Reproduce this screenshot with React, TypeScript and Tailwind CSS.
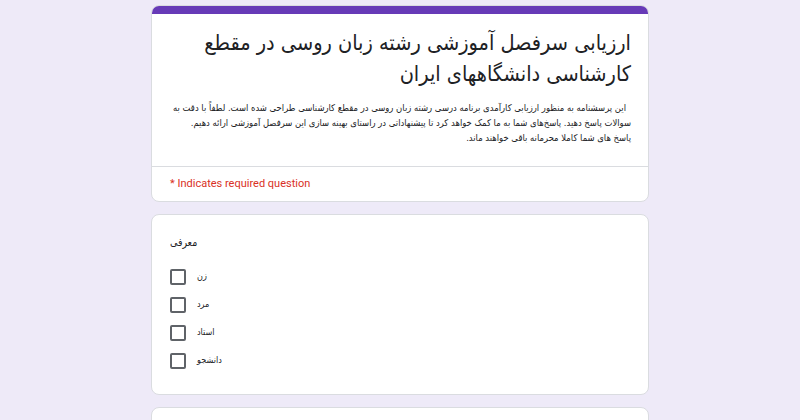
const fa = { fontFamily: '"DejaVu Sans Condensed", "DejaVu Sans", sans-serif' };

const options = ['زن', 'مرد', 'استاد', 'دانشجو'];

function Checkbox({ label }: { label: string }) {
  return (
    <div className="flex items-center h-[28px]">
      <span className="w-[16px] h-[16px] rounded-[2px] border-2 border-[#5f6368] shrink-0" />
      <span className="ml-[11px] text-[9px] text-[#202124]" style={fa}>
        {label}
      </span>
    </div>
  );
}

export default function App() {
  return (
    <div className="h-[420px] bg-[#eeeaf8] overflow-hidden">
      <div className="w-[498px] mx-auto pt-[5px] flex flex-col gap-[12px]">
        <div className="bg-white rounded-[8px] border border-[#dadce0] overflow-hidden">
          <div className="h-[8px] bg-[#673ab7]" />
          <div dir="rtl" className="px-[17px] pt-[13px] pb-[21px] border-b border-[#dadce0]">
            <h1 className="text-[21.5px] leading-[31px] text-[#202124] font-normal" style={fa}>
              <div className="whitespace-nowrap">ارزیابی سرفصل آموزشی رشته زبان روسی در مقطع</div>
              <div className="whitespace-nowrap">کارشناسی  دانشگاههای ایران</div>
            </h1>
            <div className="mt-[11px] text-[9.4px] leading-[15px] text-[#202124]" style={fa}>
              <div className="whitespace-nowrap pr-[5px]">
                این پرسشنامه به منظور ارزیابی کارآمدی برنامه درسی رشته زبان روسی در مقطع کارشناسی طراحی شده است. لطفاً با دقت به
              </div>
              <div className="whitespace-nowrap">
                سوالات پاسخ دهید. پاسخ‌های شما به ما کمک خواهد کرد تا پیشنهاداتی در راستای بهینه سازی این سرفصل  آموزشی ارائه دهیم.
              </div>
              <div className="whitespace-nowrap">پاسخ های شما کاملا محرمانه باقی خواهند ماند.</div>
            </div>
          </div>
          <div
            className="px-[18px] py-[8px] text-[11px] leading-[18px] text-[#d93025]"
            style={{ fontFamily: 'Roboto, "Liberation Sans", sans-serif' }}
          >
            * Indicates required question
          </div>
        </div>

        <div className="bg-white rounded-[8px] border border-[#dadce0] px-[18px] pt-[18px] pb-[19px]">
          <div className="text-[10.5px] leading-[18px] text-[#202124]" style={fa}>
            معرفی
          </div>
          <div className="mt-[12px] flex flex-col">
            {options.map((o) => (
              <Checkbox key={o} label={o} />
            ))}
          </div>
        </div>

        <div className="bg-white rounded-[8px] border border-[#dadce0] h-[80px]" />
      </div>
    </div>
  );
}
